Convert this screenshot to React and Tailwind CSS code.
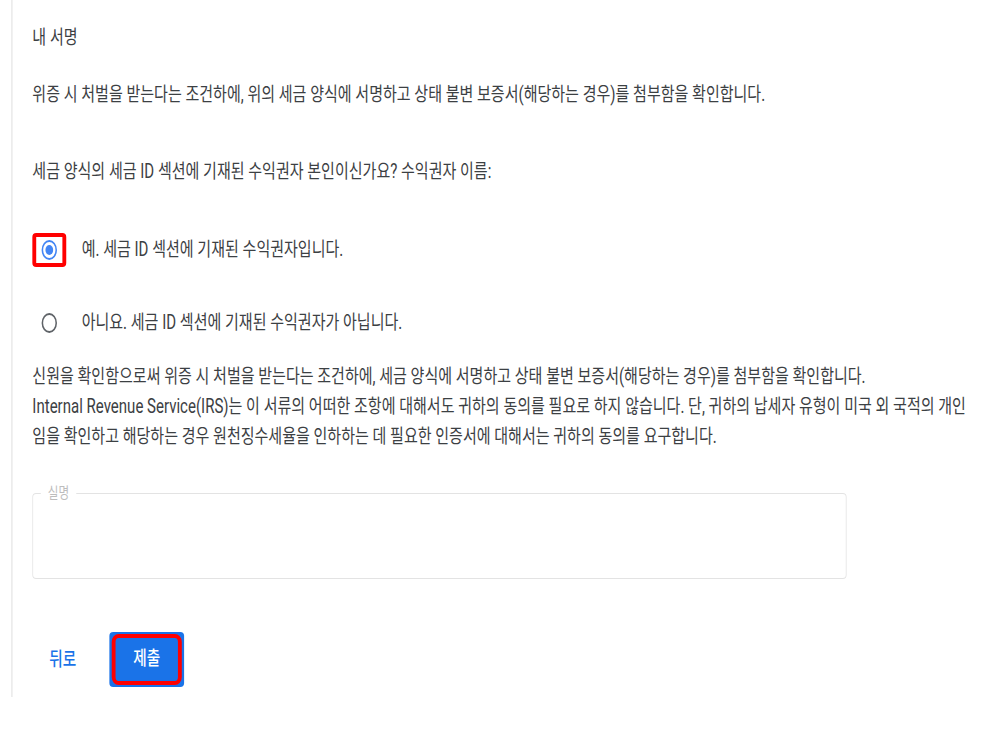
import React from 'react';

// The reference is a 1280px wide page squeezed to 986px horizontally,
// so the layout is built at 1280 and scaled on the x axis only.

const Radio = ({ checked, marked }) => (
  <span
    className={
      'flex h-[34px] w-[44px] shrink-0 items-center justify-center rounded-[5px/4px] border-x-[5px] border-y-4 ' +
      (marked ? 'border-[#ff0000]' : 'border-transparent')
    }
  >
    {checked ? (
      <span className="flex h-5 w-5 items-center justify-center rounded-full border-2 border-[#4285f4]">
        <span className="h-[10px] w-[10px] rounded-full bg-[#4285f4]" />
      </span>
    ) : (
      <span className="h-5 w-5 rounded-full border-2 border-[#5f6368]" />
    )}
  </span>
);

const RadioRow = ({ checked, marked, label, className }) => (
  <label className={'flex items-center ' + className}>
    <Radio checked={checked} marked={marked} />
    <span className="ml-5 leading-[30px]">{label}</span>
  </label>
);

export default function App() {
  return (
    <div className="h-[747px] w-full overflow-hidden bg-white">
      <div className="w-[1280px] origin-top-left scale-x-[0.7703] pl-[15px]">
        <div className="h-[697px] border-l border-[#d5d5d5] pl-[26px] pr-[10px] pt-[23px] font-['Roboto','Noto_Sans_CJK_KR',sans-serif] text-[19.5px] text-[#3c4043]">
          <h2 className="leading-[30px]">내 서명</h2>

          <p className="mt-[27px] leading-[30px]">
            위증 시 처벌을 받는다는 조건하에, 위의 세금 양식에 서명하고 상태 불변 보증서(해당하는 경우)를 첨부함을 확인합니다.
          </p>

          <p className="mt-[47px] leading-[30px]">
            세금 양식의 세금 ID 섹션에 기재된 수익권자 본인이신가요? 수익권자 이름:
          </p>

          <RadioRow
            className="mt-[46px]"
            checked
            marked
            label="예. 세금 ID 섹션에 기재된 수익권자입니다."
          />
          <RadioRow
            className="mt-[39px]"
            label="아니요. 세금 ID 섹션에 기재된 수익권자가 아닙니다."
          />

          <p className="mt-[22px] whitespace-nowrap leading-[30px]">
            신원을 확인함으로써 위증 시 처벌을 받는다는 조건하에, 세금 양식에 서명하고 상태 불변 보증서(해당하는 경우)를 첨부함을 확인합니다.
            <br />
            Internal Revenue Service(IRS)는 이 서류의 어떠한 조항에 대해서도 귀하의 동의를 필요로 하지 않습니다. 단, 귀하의 납세자 유형이 미국 외 국적의 개인
            <br />
            임을 확인하고 해당하는 경우 원천징수세율을 인하하는 데 필요한 인증서에 대해서는 귀하의 동의를 요구합니다.
          </p>

          <div className="relative mt-[41px] h-[86px] w-[1057px] rounded-[5px/4px] border border-[#e3e3e3]">
            <span className="absolute -top-[11px] left-[10px] bg-white px-[9px] text-[15px] leading-5 text-[#bdbdbd]">
              실명
            </span>
          </div>

          <div className="mt-[53px] flex items-center gap-[21px]">
            <button className="px-[22px] text-[19px] font-medium leading-[30px] text-[#1a73e8]">
              뒤로
            </button>
            <button className="h-[55px] w-[97px] rounded-[5px/4px] bg-[#1a73e8] px-[3px] py-[2px]">
              <span className="flex h-full w-full items-center justify-center rounded-[9px/8px] border-x-[5px] border-y-4 border-[#ff0000] text-[19px] font-medium text-white">
                제출
              </span>
            </button>
          </div>
        </div>
      </div>
    </div>
  );
}
